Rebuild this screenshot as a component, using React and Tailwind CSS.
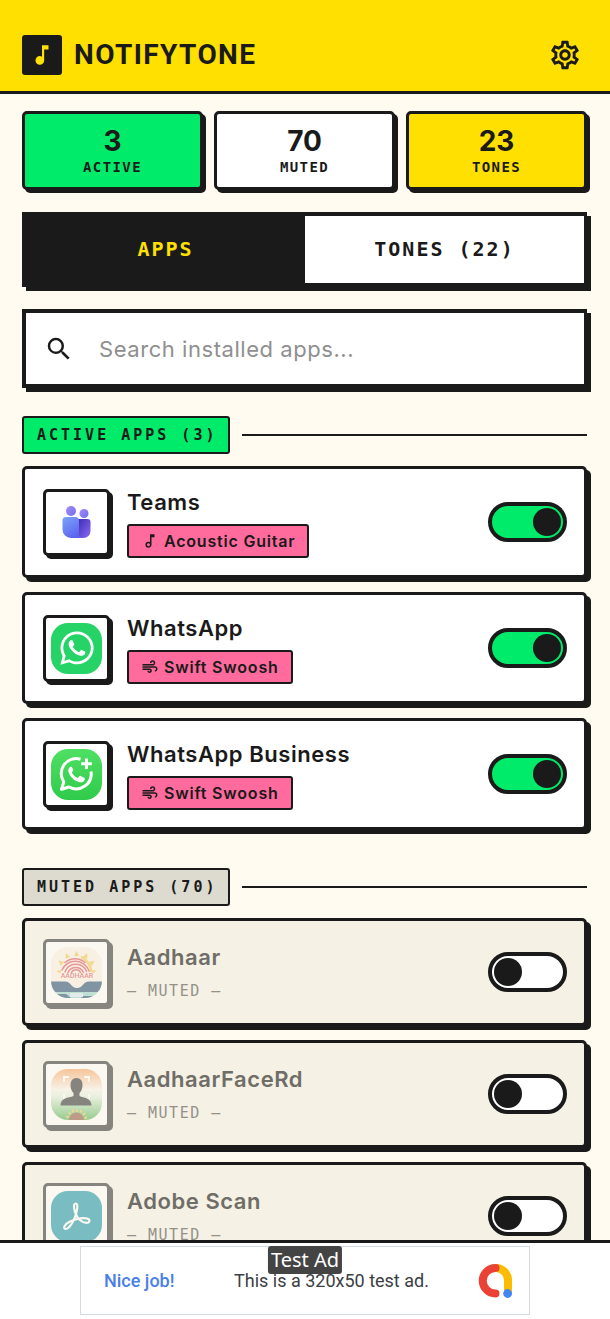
import { useState } from 'react'
import { MdAir, MdMusicNote, MdOutlineMusicNote, MdOutlineSettings, MdSearch } from 'react-icons/md'
import { FaWhatsapp } from 'react-icons/fa'

function TeamsIcon() {
  return (
    <svg viewBox="0 0 51 51" className="size-[51px]" aria-hidden="true">
      <defs>
        <linearGradient id="teams-left" x1="0" y1="0" x2="0.6" y2="1">
          <stop offset="0" stopColor="#7aa5fa" />
          <stop offset="1" stopColor="#5b63ee" />
        </linearGradient>
        <linearGradient id="teams-right" x1="0" y1="0" x2="1" y2="1">
          <stop offset="0" stopColor="#3f2bb5" />
          <stop offset="1" stopColor="#8a6cf5" />
        </linearGradient>
        <linearGradient id="teams-head" x1="0" y1="0" x2="1" y2="1">
          <stop offset="0" stopColor="#a58cf8" />
          <stop offset="1" stopColor="#6f6ef0" />
        </linearGradient>
      </defs>
      <circle cx="20" cy="14" r="5" fill="url(#teams-head)" />
      <circle cx="33" cy="16.5" r="4.5" fill="url(#teams-head)" />
      <path d="M27 22h9.500a3 3 0 0 1 3 3v9a7 7 0 0 1-7 7H27z" fill="url(#teams-right)" />
      <path d="M15 20h10a3.500 3.500 0 0 1 3 3v14a4 4 0 0 0 4 4H20a8.500 8.500 0 0 1-8.500-8.500v-9A3.500 3.500 0 0 1 15 20z" fill="url(#teams-left)" />
    </svg>
  )
}

function WhatsAppIcon() {
  return (
    <span className="flex size-[51px] items-center justify-center rounded-[17px] bg-[#25d366]">
      <FaWhatsapp className="size-[38px] text-white" aria-hidden="true" />
    </span>
  )
}

function WhatsAppBusinessIcon() {
  return (
    <svg viewBox="0 0 51 51" className="size-[51px]" aria-hidden="true">
      <defs>
        <linearGradient id="wab" x1="0" y1="0" x2="0" y2="1">
          <stop offset="0" stopColor="#4fe063" />
          <stop offset="1" stopColor="#2fcb4b" />
        </linearGradient>
      </defs>
      <rect width="51" height="51" rx="17" fill="url(#wab)" />
      <path
        d="M29.500 10.200A15 15 0 0 0 12.800 33L10.500 40.200l7.500-2.200A15 15 0 0 0 40 22.500"
        fill="none"
        stroke="#fff"
        strokeWidth="3"
        strokeLinejoin="round"
      />
      <path d="M35.500 9.500v10.500M30.200 14.800h10.600" stroke="#fff" strokeWidth="3" />
      <path
        d="M19.500 17.800c-1.600.6-2.600 2.500-2.100 4.800 1.200 5 6 9.600 11 10.600 2.500.5 4.700-.6 5.300-2.500.3-1 .2-1.600-.5-2l-3.500-1.700c-.7-.3-1.100-.2-1.600.4l-1.300 1.600c-2.700-1-4.800-3-6-5.500l1.200-1.600c.4-.5.4-.9.200-1.500l-1.400-2.300c-.3-.4-.8-.5-1.300-.3z"
        fill="#fff"
      />
    </svg>
  )
}

function AadhaarIcon() {
  return (
    <svg viewBox="0 0 51 51" className="size-[51px]" aria-hidden="true">
      <defs>
        <clipPath id="aadhaar-clip">
          <rect width="51" height="51" rx="17" />
        </clipPath>
      </defs>
      <g clipPath="url(#aadhaar-clip)">
        <rect width="51" height="51" fill="#fdf0e4" />
        <g fill="#f3bf3a">
          <path d="M23 9l2.500-5L28 9zM32 10l4-4 .5 5.500zM19 10l-4-4-.5 5.500zM38 15l5.500-1.500L41 19zM13 15l-5.500-1.500L10 19zM41 23l4.500 1-4 2.500zM10 23l-4.500 1 4 2.500z" />
        </g>
        <path d="M30 10a16 16 0 0 1 10 15" fill="none" stroke="#f3bf3a" strokeWidth="2.500" />
        <g fill="none" stroke="#d8404a" strokeWidth="1.500" strokeLinecap="round">
          <path d="M11 23a14.500 14.500 0 0 1 27 1" />
          <path d="M14 25a11.500 11.500 0 0 1 21.500-.5" />
          <path d="M17 25.500a8.500 8.500 0 0 1 15.500 0" />
          <path d="M20.500 25.500a5 5 0 0 1 9 0" />
          <path d="M14 15.500a15 15 0 0 1 20 0" />
        </g>
        <text x="26" y="31" textAnchor="middle" fontSize="7" fontFamily="Roboto, sans-serif" fontWeight="500" fill="#d8404a">
          AADHAAR
        </text>
        <path d="M0 34.500h14c6 0 6 6.500 12 6.500s6-6.500 12-6.500h13V45H0z" fill="#0e3a66" />
        <path d="M0 45h51v6H0z" fill="#8ccfc4" />
        <path d="M0 47h15l5 4H0zM32 49h19v2H30z" fill="#0e3a66" />
        <path d="M19 46h13v4H19z" fill="#cfe8f2" />
      </g>
    </svg>
  )
}

function AadhaarFaceIcon() {
  return (
    <svg viewBox="0 0 51 51" className="size-[51px]" aria-hidden="true">
      <defs>
        <linearGradient id="face-bg" x1="0" y1="0" x2="0" y2="1">
          <stop offset="0" stopColor="#f79a52" />
          <stop offset="0.4" stopColor="#fbf3ea" />
          <stop offset="0.55" stopColor="#dcefd9" />
          <stop offset="1" stopColor="#3da63c" />
        </linearGradient>
        <clipPath id="face-clip">
          <rect width="51" height="51" rx="17" />
        </clipPath>
      </defs>
      <g clipPath="url(#face-clip)">
        <rect width="51" height="51" fill="url(#face-bg)" />
        <path d="M13 13V8h5M33 8h5v5M13 25v5h5M33 30h5v-5" fill="none" stroke="#fff" strokeWidth="2" />
        <path d="M25.500 9c4 0 6 3 6 7 0 3.500-1 6-3 8v3c4 2 12 1.500 12 9.500h-31c0-8 8-7.500 13-9.500v-3c-2-2-3-4.500-3-8 0-4 2-7 6-7z" fill="#1a1a1a" />
        <circle cx="25.500" cy="51" r="9.500" fill="none" stroke="#f3bf3a" strokeWidth="2.500" strokeDasharray="2 2" />
        <circle cx="25.500" cy="51" r="7.500" fill="#8a4a2c" />
      </g>
    </svg>
  )
}

function AdobeScanIcon() {
  return (
    <svg viewBox="0 0 51 51" className="size-[51px]" aria-hidden="true">
      <rect width="51" height="51" rx="17" fill="#00899f" />
      <path
        d="M24.800 12.500c-2.800 0-2 6 .2 11 1.400 3.500 5.500 8.300 10.500 8.300 3.800 0 4-4 0-4.500-5-.8-11.500.8-17 3.500-4.500 2.300-6.500 6-4.500 7 3 1.300 7-4.500 9.500-10.500 2.600-6 4.200-14.800 1.300-14.800z"
        fill="none"
        stroke="#fff"
        strokeWidth="2.200"
      />
    </svg>
  )
}

function AdLogo() {
  return (
    <svg viewBox="0 0 34 34" className="size-[34px]" aria-hidden="true">
      <path d="M18 4A12 12.500 0 0 1 30 17v12" fill="none" stroke="#fbbc04" strokeWidth="8" />
      <path d="M17.500 4a12.750 12.750 0 0 0 0 25.500" fill="none" stroke="#ea4335" strokeWidth="8" strokeLinecap="round" />
      <circle cx="29.600" cy="29.500" r="4.400" fill="#4285f4" />
    </svg>
  )
}

const STATS = [
  { label: 'ACTIVE', value: 3, color: 'bg-[#00eb6a]' },
  { label: 'MUTED', value: 70, color: 'bg-white' },
  { label: 'TONES', value: 23, color: 'bg-[#ffe000]' },
]

const APPS = [
  { id: 'teams', name: 'Teams', icon: TeamsIcon, tone: 'Acoustic Guitar', toneIcon: MdOutlineMusicNote, active: true },
  { id: 'whatsapp', name: 'WhatsApp', icon: WhatsAppIcon, tone: 'Swift Swoosh', toneIcon: MdAir, active: true },
  { id: 'wab', name: 'WhatsApp Business', icon: WhatsAppBusinessIcon, tone: 'Swift Swoosh', toneIcon: MdAir, active: true },
  { id: 'aadhaar', name: 'Aadhaar', icon: AadhaarIcon, active: false },
  { id: 'aadhaarface', name: 'AadhaarFaceRd', icon: AadhaarFaceIcon, active: false },
  { id: 'adobescan', name: 'Adobe Scan', icon: AdobeScanIcon, active: false },
]

function StatCard({ label, value, color }) {
  return (
    <div className={`flex flex-col items-center gap-[2px] rounded-[5px] border-3 border-[#1a1a1a] pt-[13px] pb-[10px] shadow-[3px_3px_0_#1a1a1a] ${color}`}>
      <span className="text-[28px] leading-7 font-bold">{value}</span>
      <span className="font-['DejaVu_Sans_Mono',monospace] text-[14px] leading-5 font-bold tracking-widest">{label}</span>
    </div>
  )
}

function SectionTitle({ children, color }) {
  return (
    <div className="flex items-center gap-3">
      <h2
        className={`rounded-[3px] border-2 border-[#1a1a1a] py-[7px] pr-[11px] pl-[13px] font-['DejaVu_Sans_Mono',monospace] text-[15px] leading-5 font-bold tracking-[0.2em] ${color}`}
      >
        {children}
      </h2>
      <span className="h-[2px] flex-1 bg-[#1a1a1a]" />
    </div>
  )
}

function AppCard({ app }) {
  const [on, setOn] = useState(app.active)
  const Icon = app.icon
  const ToneIcon = app.toneIcon

  return (
    <li
      className={`flex min-h-[108px] items-center gap-[17px] rounded-[5px] border-3 border-[#1a1a1a] pr-[17px] pl-[18px] shadow-[4px_4px_0_#1a1a1a] ${
        app.active ? 'bg-white py-[17px]' : 'bg-[#f5f1e4]'
      }`}
    >
      <span
        className={`flex size-[67px] shrink-0 items-center justify-center rounded-[5px] border-3 border-[#1a1a1a] bg-white shadow-[3px_3px_0_#1a1a1a] ${
          app.active ? '' : 'opacity-50'
        }`}
      >
        <Icon />
      </span>
      <div className="flex min-w-0 flex-1 flex-col items-start gap-[6px]">
        <label
          htmlFor={app.id}
          className={`text-[22px] leading-8 font-semibold tracking-wide ${app.active ? '' : 'text-[#6f6d67]'}`}
        >
          {app.name}
        </label>
        {app.tone ? (
          <button
            type="button"
            className="flex h-[34px] items-center gap-[5px] rounded-[3px] border-2 border-[#1a1a1a] bg-[#ff6b9d] px-3 text-[16px] font-semibold tracking-wider"
          >
            <ToneIcon className="size-[18px]" aria-hidden="true" />
            {app.tone}
          </button>
        ) : (
          <span className="font-['DejaVu_Sans_Mono',monospace] text-[15px] leading-6 tracking-widest text-[#93918a]">
            — MUTED —
          </span>
        )}
      </div>
      <input
        id={app.id}
        type="checkbox"
        role="switch"
        checked={on}
        onChange={(e) => setOn(e.target.checked)}
        className="h-10 w-[79px] shrink-0 cursor-pointer appearance-none rounded-full border-4 border-[#1a1a1a] bg-white p-[2px] before:block before:size-7 before:rounded-full before:bg-[#1a1a1a] checked:bg-[#00eb6a] checked:before:translate-x-[39px]"
      />
    </li>
  )
}

export default function App() {
  const [tab, setTab] = useState('apps')
  const [query, setQuery] = useState('')

  const matches = APPS.filter((app) => app.name.toLowerCase().includes(query.toLowerCase()))
  const tabClass = (name) =>
    `flex-1 pb-[2px] font-['DejaVu_Sans_Mono',monospace] text-[20px] leading-7 font-bold tracking-widest ${
      tab === name ? 'bg-[#1a1a1a] text-[#ffe000]' : 'bg-white'
    }`

  return (
    <div className="flex h-screen flex-col bg-[#fffbf0] font-['Inter',sans-serif] text-[#1a1a1a]">
      <header className="flex items-center gap-3 border-b-3 border-[#1a1a1a] bg-[#ffe000] pt-[35px] pr-[25px] pb-4 pl-[22px]">
        <span className="flex size-10 items-center justify-center rounded-[3px] bg-[#1a1a1a] text-[#ffe000]">
          <MdMusicNote className="size-[26px]" aria-hidden="true" />
        </span>
        <h1 className="flex-1 font-['Roboto',sans-serif] text-[28px] leading-10 font-bold tracking-wider">NOTIFYTONE</h1>
        <button type="button" aria-label="Settings" className="flex size-10 items-center justify-center">
          <MdOutlineSettings className="size-[34px]" aria-hidden="true" />
        </button>
      </header>

      <main className="min-h-0 flex-1 overflow-y-auto pt-[17px] pr-[23px] pb-6 pl-[22px] [scrollbar-width:none]">
        <section className="grid grid-cols-3 gap-[11px]">
          {STATS.map((stat) => (
            <StatCard key={stat.label} {...stat} />
          ))}
        </section>

        <div className="mt-[22px] flex h-[75px] border-4 border-r-3 border-[#1a1a1a] shadow-[4px_4px_0_#1a1a1a]">
          <button type="button" onClick={() => setTab('apps')} className={tabClass('apps')}>
            APPS
          </button>
          <button type="button" onClick={() => setTab('tones')} className={tabClass('tones')}>
            TONES (22)
          </button>
        </div>

        <label className="mt-[22px] flex h-[79px] items-center gap-[25px] border-4 border-r-3 border-[#1a1a1a] bg-white px-[18px] shadow-[4px_4px_0_#1a1a1a]">
          <MdSearch className="size-[30px] shrink-0" aria-hidden="true" />
          <input
            type="text"
            value={query}
            onChange={(e) => setQuery(e.target.value)}
            placeholder="Search installed apps..."
            aria-label="Search installed apps"
            className="min-w-0 flex-1 text-[22px] leading-8 tracking-wide outline-none placeholder:text-[#8f8f8f]"
          />
        </label>

        <section className="mt-7">
          <SectionTitle color="bg-[#00eb6a]">ACTIVE APPS (3)</SectionTitle>
          <ul className="mt-3 flex flex-col gap-[14px]">
            {matches.filter((app) => app.active).map((app) => (
              <AppCard key={app.id} app={app} />
            ))}
          </ul>
        </section>

        <section className="mt-[38px]">
          <SectionTitle color="bg-[#dddacf]">MUTED APPS (70)</SectionTitle>
          <ul className="mt-3 flex flex-col gap-[14px]">
            {matches.filter((app) => !app.active).map((app) => (
              <AppCard key={app.id} app={app} />
            ))}
          </ul>
        </section>
      </main>

      <footer className="flex justify-center border-t-3 border-[#1a1a1a] bg-white pt-[3px] pb-1">
        <a
          href="#ad"
          className="relative flex h-[69px] w-[450px] items-center border border-[#d3dbe0] pr-[17px] pl-[23px] font-['Roboto',sans-serif] text-[18px] text-[#3c4043]"
        >
          <span className="w-[130px] font-medium text-[#4a80e8]">Nice job!</span>
          <span className="flex-1">This is a 320x50 test ad.</span>
          <AdLogo />
          <span className="absolute -top-px left-1/2 -translate-x-1/2 rounded-[3px] bg-[#444] px-[3px] font-['Noto_Sans',sans-serif] text-[20px] leading-7 whitespace-nowrap text-white">
            Test Ad
          </span>
        </a>
      </footer>
    </div>
  )
}
